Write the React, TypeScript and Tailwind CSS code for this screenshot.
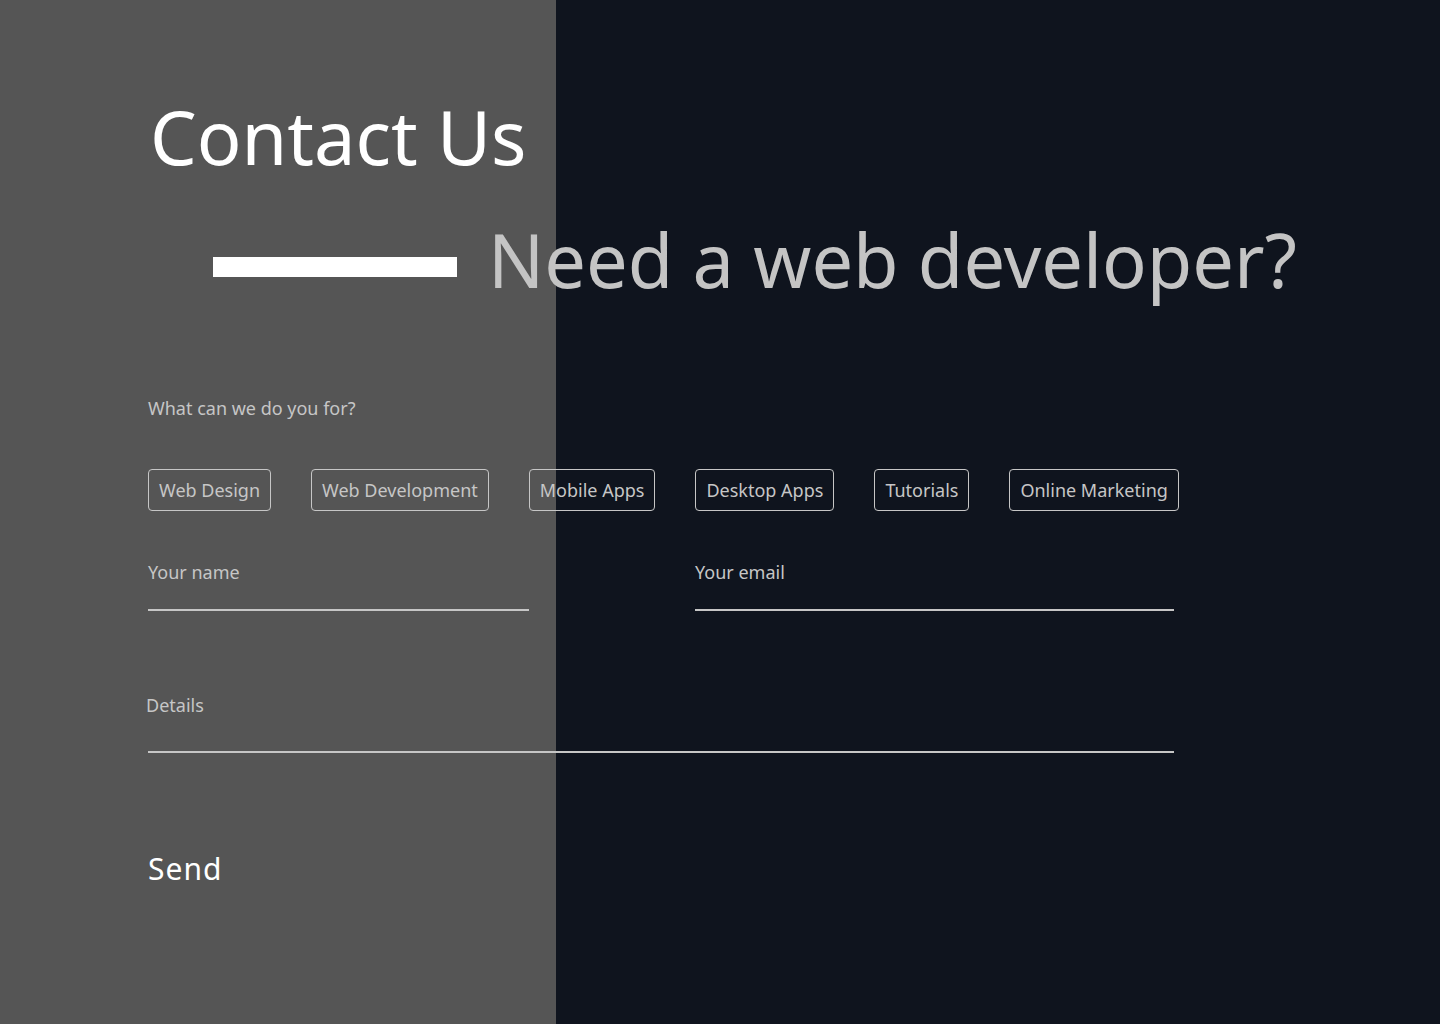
import React from "react";

const services = ["Web Design", "Web Development", "Mobile Apps", "Desktop Apps", "Tutorials", "Online Marketing"];

export default function App() {
  return (
    <div
      className="min-h-[1024px] w-full bg-[linear-gradient(to_right,#555555_556px,#0f141e_556px)] text-[#c6c6c6]"
      style={{ fontFamily: '"Noto Sans", "Open Sans", sans-serif' }}
    >
      <div className="pl-[148px] pt-[92px]">
        <h1 className="text-[74px] leading-[90px] text-white font-normal pl-[2px]">Contact Us</h1>
        <div className="flex items-center mt-[33px]">
          <div className="ml-[65px] w-[244px] h-[20px] bg-white mt-[14px]" />
          <div className="ml-[31px] text-[74px] leading-[90px] text-[#c4c4c4]">Need a web developer?</div>
        </div>
        <div className="mt-[91px] text-[18px] leading-[24px]">What can we do you for?</div>
        <div className="flex gap-[40px] mt-[49px]">
          {services.map((s) => (
            <div key={s} className="h-[42px] px-[10px] flex items-center border border-[#c6c6c6] rounded-[4px] text-[18px]">
              {s}
            </div>
          ))}
        </div>
        <div className="flex gap-[166px] mt-[49px] w-[1026px]">
          <div className="w-[381px]">
            <div className="text-[18px] leading-[24px] h-[49px]">Your name</div>
            <div className="h-[2px] bg-[#c6c6c6]" />
          </div>
          <div className="w-[479px]">
            <div className="text-[18px] leading-[24px] h-[49px]">Your email</div>
            <div className="h-[2px] bg-[#c6c6c6]" />
          </div>
        </div>
        <div className="w-[1026px] mt-[82px]">
          <div className="text-[18px] leading-[24px] h-[58px] -ml-[2px]">Details</div>
          <div className="h-[2px] bg-[#c6c6c6]" />
        </div>
        <div className="mt-[96px] text-[30px] leading-[40px] text-white tracking-[1px]">Send</div>
      </div>
    </div>
  );
}
